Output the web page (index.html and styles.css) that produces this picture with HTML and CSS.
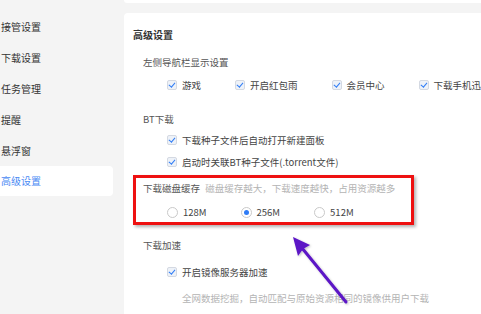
FILE: index.html
```html
<!DOCTYPE html>
<html lang="zh-CN">
<head>
    <meta charset="UTF-8">
    <meta name="viewport" content="width=device-width, initial-scale=1.0">
    <title>设置 - 高级设置</title>
    <link rel="stylesheet" href="styles.css">
</head>
<body>
    <aside class="sidebar">
        <div class="nav-item">接管设置</div>
        <div class="nav-item">下载设置</div>
        <div class="nav-item">任务管理</div>
        <div class="nav-item">提醒</div>
        <div class="nav-item">悬浮窗</div>
        <div class="nav-item active">高级设置</div>
    </aside>

    <main class="main">
        <div class="card-top"></div>
        <div class="card">
            <h2 class="card-title">高级设置</h2>

            <div class="section">
                <div class="section-title">左侧导航栏显示设置</div>
                <div class="option-row inline">
                    <label class="check"><span class="box checked"></span>游戏</label>
                    <label class="check"><span class="box checked"></span>开启红包雨</label>
                    <label class="check"><span class="box checked"></span>会员中心</label>
                    <label class="check"><span class="box checked"></span>下载手机迅雷</label>
                </div>
            </div>

            <div class="section bt">
                <div class="section-title">BT下载</div>
                <div class="option-row">
                    <label class="check"><span class="box checked"></span>下载种子文件后自动打开新建面板</label>
                </div>
                <div class="option-row second">
                    <label class="check"><span class="box checked"></span>启动时关联BT种子文件(.torrent文件)</label>
                </div>
            </div>

            <div class="section highlight">
                <div class="section-title">下载磁盘缓存 <span class="hint">磁盘缓存越大，下载速度越快，占用资源越多</span></div>
                <div class="option-row inline radios">
                    <label class="radio"><span class="dot"></span>128M</label>
                    <label class="radio"><span class="dot on"></span>256M</label>
                    <label class="radio"><span class="dot"></span>512M</label>
                </div>
            </div>

            <div class="section speed">
                <div class="section-title">下载加速</div>
                <div class="option-row">
                    <label class="check"><span class="box checked"></span>开启镜像服务器加速</label>
                </div>
                <div class="option-desc">全网数据挖掘，自动匹配与原始资源相同的镜像供用户下载</div>
            </div>
        </div>
    </main>

    <svg class="arrow" width="481" height="314" viewBox="0 0 481 314">
        <defs>
            <filter id="glow" x="-20%" y="-20%" width="140%" height="140%">
                <feDropShadow dx="1" dy="1" stdDeviation="1" flood-color="#000" flood-opacity="0.25"/>
            </filter>
        </defs>
        <g filter="url(#glow)">
            <line x1="346" y1="302" x2="302" y2="248" stroke="#5b14c6" stroke-width="3" stroke-linecap="round"/>
            <polygon points="293,237 310,245 303,249 298,256" fill="#5b14c6"/>
        </g>
    </svg>
</body>
</html>
```

FILE: styles.css
```css
body {
    margin: 0;
    width: 481px;
    height: 314px;
    overflow: hidden;
    display: flex;
    background-color: #f4f4f4;
    font-family: "Noto Sans CJK SC", "Noto Sans", sans-serif;
    font-size: 9.5px;
    color: #444;
    position: relative;
}
.sidebar {
    width: 124px;
    flex-shrink: 0;
    padding-top: 11px;
    display: flex;
    flex-direction: column;
}
.nav-item {
    width: 112px;
    height: 31px;
    line-height: 31px;
    padding-left: 1px;
    color: #333;
    font-size: 10px;
}
.nav-item.active {
    background-color: white;
    color: #4a8af4;
    border-radius: 0 4px 4px 0;
    height: 30px;
    line-height: 30px;
}
.main {
    flex: 1;
    display: flex;
    flex-direction: column;
}
.card-top {
    height: 3px;
    background-color: white;
    border-radius: 0 0 0 4px;
}
.card {
    flex: 1;
    margin-top: 10px;
    background-color: white;
    border-radius: 4px 0 0 0;
    padding: 15px 0 0 9px;
}
.card-title {
    margin: 0;
    font-size: 10px;
    line-height: 14px;
    font-weight: bold;
    color: #333;
}
.section {
    margin-left: 10px;
    margin-top: 13px;
}
.section-title {
    line-height: 14px;
    color: #555;
}
.option-row {
    margin-top: 9px;
    padding-left: 24px;
    line-height: 14px;
    height: 14px;
}
.option-row.inline {
    display: flex;
    gap: 34px;
}
.bt {
    margin-top: 20px;
}
.bt .option-row {
    margin-top: 7px;
}
.bt .option-row.second {
    margin-top: 8px;
}
.check,
.radio {
    display: flex;
    align-items: center;
    gap: 5px;
    white-space: nowrap;
    color: #444;
}
.box {
    width: 8px;
    height: 8px;
    border: 1px solid #d4d9e2;
    border-radius: 2px;
    background-color: #eef2f8;
    position: relative;
}
.box.checked::after {
    content: "";
    position: absolute;
    left: 2px;
    top: 0px;
    width: 2.5px;
    height: 5px;
    border: solid #2f7cf6;
    border-width: 0 1.5px 1.5px 0;
    transform: rotate(40deg);
}
.highlight {
    margin-left: 0;
    margin-top: 6px;
    width: 268px;
    border: 3px solid #ee1111;
    padding: 3px 0 3px 7px;
    box-shadow: 2px 2px 3px rgba(0, 0, 0, 0.3);
}
.hint {
    color: #b4b4b4;
    margin-left: 3px;
}
.radios {
    margin-top: 10px;
}
.dot {
    width: 9px;
    height: 9px;
    border: 1px solid #c9c9c9;
    border-radius: 50%;
    background-color: white;
    position: relative;
}
.dot.on::after {
    content: "";
    position: absolute;
    left: 2px;
    top: 2px;
    width: 5px;
    height: 5px;
    border-radius: 50%;
    background-color: #2f7cf6;
}
.speed {
    margin-top: 13px;
}
.speed .option-row {
    margin-top: 13px;
}
.option-desc {
    margin-top: 12px;
    padding-left: 39px;
    line-height: 14px;
    color: #b4b4b4;
}
.arrow {
    position: absolute;
    left: 0;
    top: 0;
    pointer-events: none;
}
```
